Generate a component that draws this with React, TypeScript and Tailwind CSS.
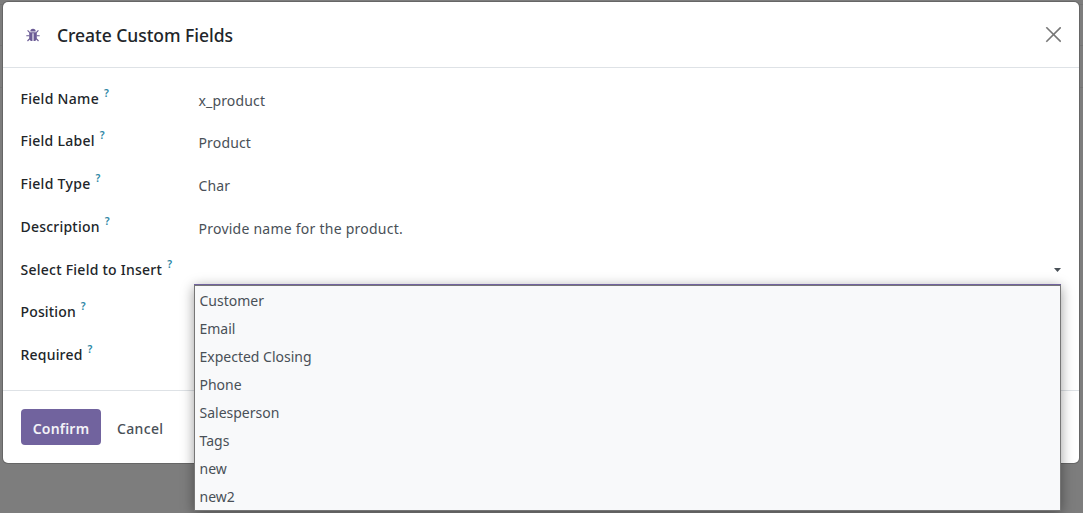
const fields = [
  { label: "Field Name", value: "x_product", height: "h-[42px]", track: "tracking-[0.3px]", vt: "tracking-[0.15px]" },
  { label: "Field Label", value: "Product", height: "h-[43px]", track: "tracking-[0.27px]", vt: "tracking-[0.15px]" },
  { label: "Field Type", value: "Char", height: "h-[43px]", track: "tracking-[0.3px]", vt: "tracking-[0.1px]" },
  { label: "Description", value: "Provide name for the product.", height: "h-[43px]", track: "tracking-[0.22px]", vt: "tracking-[0.24px]" },
  { label: "Select Field to Insert", value: "", height: "h-[42px]", track: "tracking-[0.25px]", vt: "" },
  { label: "Position", value: "", height: "h-[43px]", track: "tracking-[0.15px]", vt: "" },
  { label: "Required", value: "", height: "h-[43px]", track: "tracking-[0.2px]", vt: "" },
];

const options = ["Customer", "Email", "Expected Closing", "Phone", "Salesperson", "Tags", "new", "new2"];

function BugIcon() {
  return (
    <svg viewBox="0 0 14 14" className="mt-px h-[14px] w-[14px] fill-none stroke-[#6b5b95]">
      <path d="M4.3 3.4a2.7 2.7 0 0 1 5.4 0z" className="fill-[#6b5b95] stroke-none" />
      <path d="M3.2 4.2h7.6v6.2q0 1.8-1.8 2.5H5q-1.8-.7-1.8-2.5z" className="fill-[#6b5b95] stroke-none" />
      <path d="M7 5.2v7.9" className="stroke-[#d5cfe3] stroke-[1.5]" />
      <path d="M.3 7.7H3.4M10.6 7.7h3.1M1.6 2.3l2.2 2.3M12.4 2.3l-2.2 2.3M1.5 13l2.2-2.4M12.5 13l-2.2-2.4" className="stroke-[1.15]" />
    </svg>
  );
}

export default function App() {
  return (
    <div className="relative h-[513px] w-[1083px] overflow-hidden bg-[linear-gradient(#747474,#747474),linear-gradient(#747474,#747474),linear-gradient(#747474,#747474)] bg-[length:100%_1px] bg-[position:0_4px,0_45px,0_87px] bg-no-repeat bg-[#7d7d7d] pt-[2px] pl-[3px] font-['Noto_Sans','Open_Sans',sans-serif] text-sm">
      <div className="flex h-[461px] w-[1076px] flex-col rounded-[5px] bg-white shadow-[0_0_0_1px_#666666]">
        <header className="flex h-[66px] items-center border-b border-[#dee2e6] pr-[18px] pl-[23px]">
          <BugIcon />
          <h1 className="ml-[17px] text-[17.5px] leading-6 font-medium tracking-[-0.04px] whitespace-nowrap text-[#212529]">Create Custom Fields</h1>
          <svg viewBox="0 0 16 16" className="ml-auto h-4 w-4 fill-none stroke-[#777777] stroke-[1.6]">
            <path d="M1.3.3l14.4 14.4M15.7.3L1.3 14.7" />
          </svg>
        </header>
        <main className="flex h-[323px] flex-col border-b border-[#dee2e6] pt-[10px] pl-[18px]">
          {fields.map((f) => (
            <div key={f.label} className={`flex shrink-0 ${f.height}`}>
              <div className="flex h-[42px] w-[178px] items-center whitespace-nowrap">
                <span className={`-ml-[0.5px] font-medium text-[#212529] ${f.track}`}>{f.label}</span>
                <span className="ml-[5px] h-[28px] text-[10.5px] leading-4 font-semibold text-[#2f87a5]">?</span>
              </div>
              <div className={`-ml-[0.5px] flex h-[46px] items-center whitespace-nowrap text-[#495057] ${f.vt}`}>{f.value}</div>
              {f.label === "Select Field to Insert" && (
                <svg viewBox="0 0 7 4" className="mt-[19px] mr-[18px] ml-auto h-1 w-[7px] fill-[#495057]">
                  <path d="M0 0h7L3.5 4z" />
                </svg>
              )}
            </div>
          ))}
        </main>
        <footer className="flex items-center gap-4 pt-[18px] pl-[18px]">
          <button className="h-9 w-20 rounded bg-[#71639e] pt-[3px] font-semibold tracking-[0.2px] text-[#f3f2f7]">Confirm</button>
          <button className="pt-[3px] font-medium tracking-[0.35px] text-[#495057]">Cancel</button>
        </footer>
      </div>
      <ul className="absolute top-[285px] left-[194px] h-[226px] w-[867px] border border-[#767676] bg-[#f8f9fa] pt-px pl-[4.5px] text-[#495057] shadow-[0_-1px_0_#71639e,0_2px_12px_rgba(0,0,0,0.4)]">
        {options.map((o) => (
          <li key={o} className="flex h-7 items-center">{o}</li>
        ))}
      </ul>
    </div>
  );
}
